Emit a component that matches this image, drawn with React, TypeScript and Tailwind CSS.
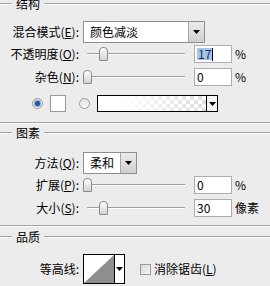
import React from "react"

const font = "font-['Noto_Sans_CJK_SC','Noto_Sans',sans-serif]"

function Label({ cn, k }: { cn: string; k?: string }) {
  return (
    <div className="w-[79px] shrink-0 text-right leading-none">
      {cn}
      {k ? (
        <>
          (<span className="underline underline-offset-[1px]">{k}</span>):
        </>
      ) : (
        ":"
      )}
    </div>
  )
}

function Header({ title }: { title: string }) {
  return (
    <div className="flex h-[12px] items-center">
      <div className="h-[2px] w-[12px] border-t border-[#a3a3a3] border-b border-b-white" />
      <span className="px-[4px] leading-none">{title}</span>
      <div className="h-[2px] flex-1 border-t border-[#a3a3a3] border-b border-b-white" />
    </div>
  )
}

function Separator() {
  return <div className="h-[2px] w-full border-t border-[#a3a3a3] border-b border-b-white" />
}

function Arrow() {
  return (
    <svg width="7" height="4" viewBox="0 0 7 4">
      <path d="M0 0h7L3.5 4z" fill="#000" />
    </svg>
  )
}

function Select({ value, width }: { value: string; width: string }) {
  return (
    <div className={`flex h-full ${width} border border-[#8f8f8f] bg-white`}>
      <div className="flex flex-1 items-center pl-[6px] leading-none">{value}</div>
      <div className="flex w-[16px] items-center justify-center border-l border-[#a8a8a8] bg-gradient-to-b from-[#ececec] to-[#cfcfcf]">
        <Arrow />
      </div>
    </div>
  )
}

// pos is the thumb place on the track, 0-100
function Slider({ pos }: { pos: number }) {
  const left = 4 + pos * 0.98 - 4.5
  return (
    <div className="relative flex h-full w-[106px] items-center px-[4px]">
      <div className="h-[2px] w-full border-t border-[#9e9e9e] border-b border-b-white" />
      <div
        className="absolute top-1/2 h-[14px] w-[9px] -translate-y-1/2 rounded-t-[4px] rounded-b-[1px] border border-[#8a8a8a] bg-gradient-to-b from-white to-[#d2d2d2]"
        style={{ left }}
      />
    </div>
  )
}

function NumInput({ value, selected }: { value: string; selected?: boolean }) {
  return (
    <div className="ml-[5px] flex h-full w-[38px] items-center border border-[#a9aeb5] bg-white pl-[2px] leading-none">
      {selected ? <span className="bg-[#a7c3e8] px-[1px] text-[#10305e]">{value}</span> : value}
      {selected && <span className="h-[13px] w-px bg-black" />}
    </div>
  )
}

function SliderRow({
  cn,
  k,
  value,
  pos,
  unit,
  selected,
}: {
  cn: string
  k: string
  value: number
  pos: number
  unit: string
  selected?: boolean
}) {
  return (
    <div className="flex h-[18px] items-center">
      <Label cn={cn} k={k} />
      <div className="ml-[4px] flex h-full items-center">
        <Slider pos={pos} />
        <NumInput value={String(value)} selected={selected} />
        <span className="ml-[3px] leading-none">{unit}</span>
      </div>
    </div>
  )
}

function Radio({ on }: { on?: boolean }) {
  return (
    <div className="flex h-[11px] w-[11px] items-center justify-center rounded-full border border-[#9a9a9a] bg-gradient-to-b from-[#e0e0e0] to-[#fafafa]">
      {on && <div className="h-[5px] w-[5px] rounded-full bg-[#1f5aa8] ring-1 ring-[#7fa4d6]" />}
    </div>
  )
}

export default function App() {
  return (
    <div className={`h-[286px] w-[270px] overflow-hidden bg-[#ececec] text-[12px] text-black ${font}`}>
      <div className="-mt-[2px]">
        <Header title="结构" />
      </div>

      <div className="mt-[11px] flex h-[22px] items-center">
        <Label cn="混合模式" k="E" />
        <div className="ml-[4px] h-full">
          <Select value="颜色减淡" width="w-[122px]" />
        </div>
      </div>

      <div className="mt-[2px]">
        <SliderRow cn="不透明度" k="O" value={17} pos={17} unit="%" selected />
      </div>
      <div className="mt-[5px]">
        <SliderRow cn="杂色" k="N" value={0} pos={0} unit="%" />
      </div>

      <div className="mt-[9px] flex h-[17px] items-center">
        <div className="ml-[32px]">
          <Radio on />
        </div>
        <div className="ml-[7px] h-full w-[16px] border border-[#9a9a9a] bg-white" />
        <div className="ml-[13px]">
          <Radio />
        </div>
        <div className="ml-[7px] flex h-full w-[121px] border border-black">
          <div className="flex-1 bg-[image:repeating-conic-gradient(#dedede_0_25%,#ffffff_0_50%)] bg-[length:8px_8px]">
            <div className="h-full w-full bg-gradient-to-r from-white from-20% to-transparent" />
          </div>
          <div className="flex w-[11px] items-center justify-center border-l border-black bg-[#f4f4f4]">
            <Arrow />
          </div>
        </div>
      </div>

      <div className="mt-[10px]">
        <Separator />
      </div>
      <div className="mt-[3px]">
        <Header title="图素" />
      </div>

      <div className="mt-[13px] flex h-[22px] items-center">
        <Label cn="方法" k="Q" />
        <div className="ml-[4px] h-full">
          <Select value="柔和" width="w-[54px]" />
        </div>
      </div>

      <div className="mt-[2px]">
        <SliderRow cn="扩展" k="P" value={0} pos={0} unit="%" />
      </div>
      <div className="mt-[5px]">
        <SliderRow cn="大小" k="S" value={30} pos={17} unit="像素" />
      </div>

      <div className="mt-[8px]">
        <Separator />
      </div>
      <div className="mt-[4px]">
        <Header title="品质" />
      </div>

      <div className="mt-[11px] flex h-[30px] items-center">
        <Label cn="等高线" />
        <div className="ml-[4px] flex h-full w-[42px] border border-black bg-white">
          <svg className="flex-1" viewBox="0 0 31 28" preserveAspectRatio="none">
            <path d="M0 28L31 0V28z" fill="#8e8e8e" />
          </svg>
          <div className="flex w-[10px] items-center justify-center border-l border-black bg-white">
            <Arrow />
          </div>
        </div>
        <div className="ml-[15px] h-[11px] w-[11px] border border-[#9a9a9a] bg-gradient-to-br from-[#d8d8d8] to-[#f6f6f6]" />
        <span className="ml-[3px] leading-none">
          消除锯齿(<span className="underline underline-offset-[1px]">L</span>)
        </span>
      </div>
    </div>
  )
}
